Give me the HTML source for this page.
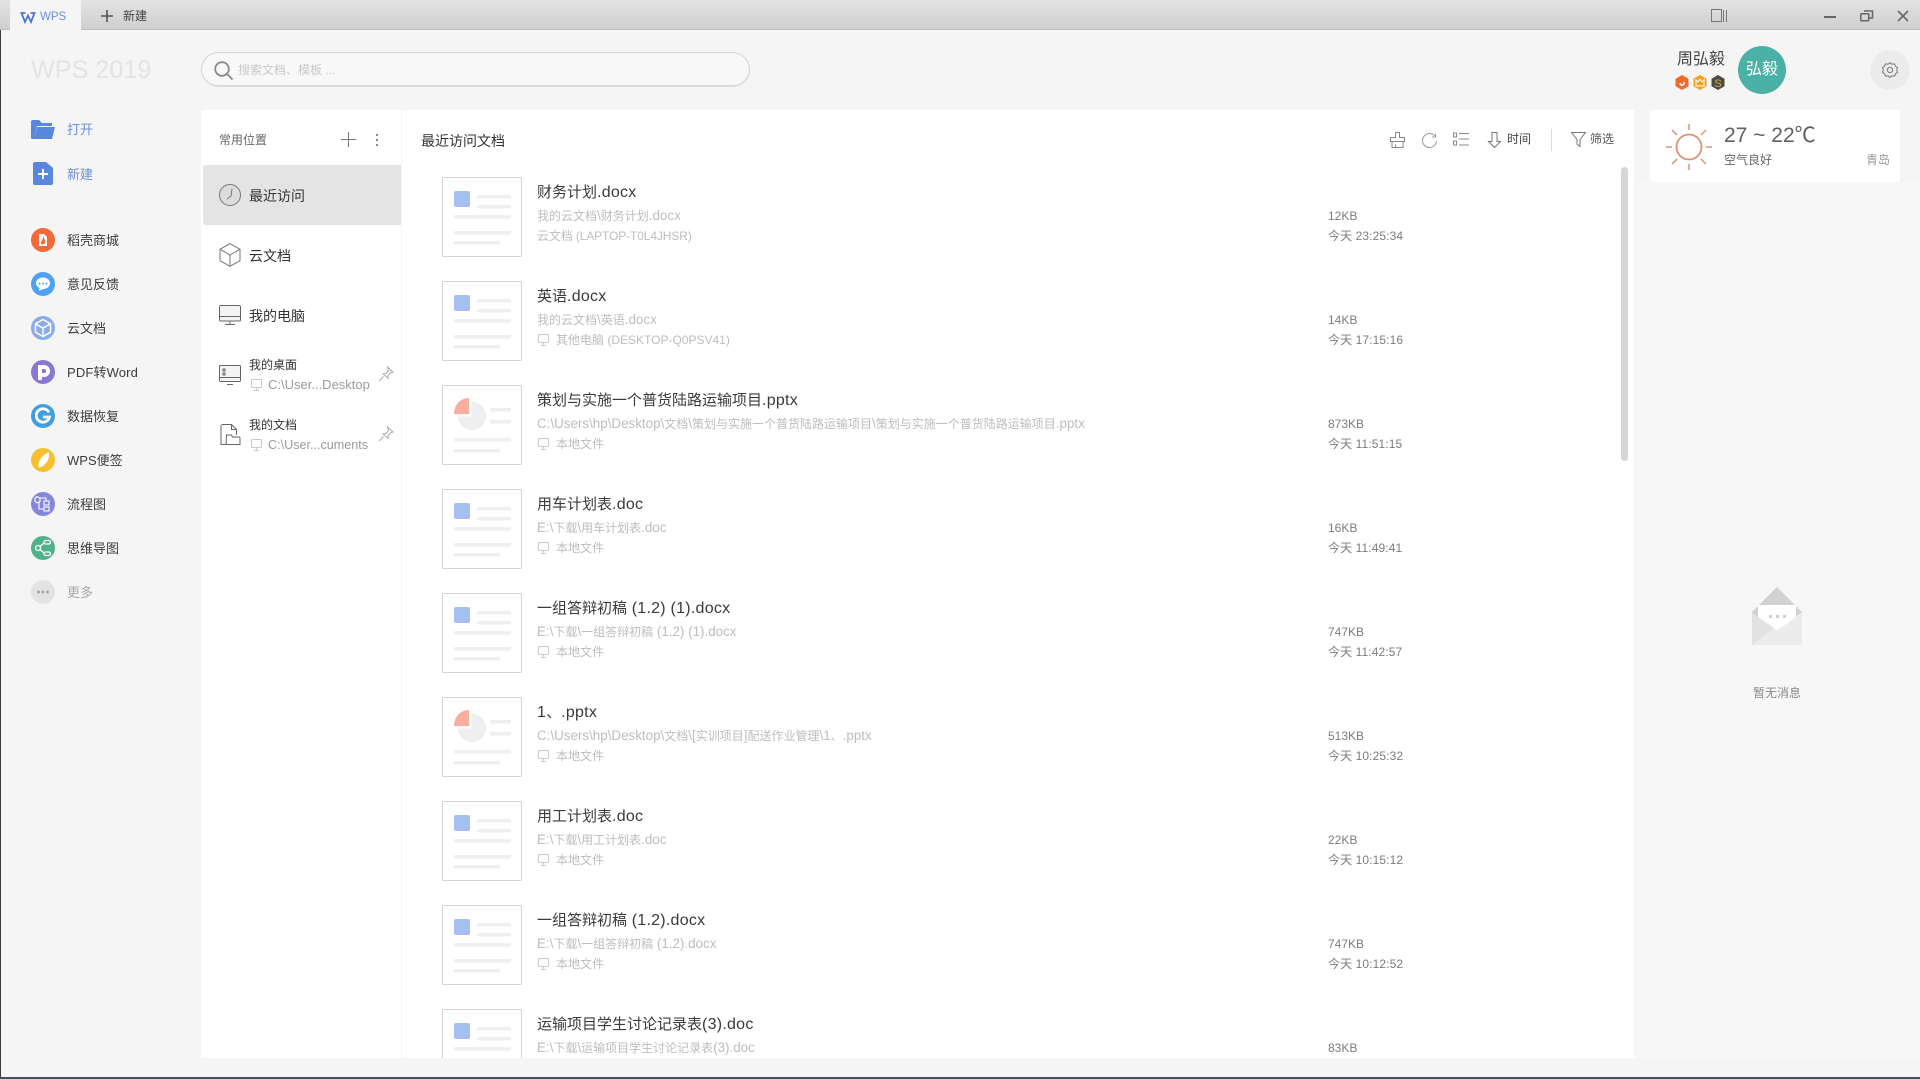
<!DOCTYPE html>
<html lang="zh"><head><meta charset="utf-8"><title>WPS 2019</title>
<style>
*{box-sizing:border-box}
html,body{margin:0;padding:0}
body{width:1920px;height:1079px;overflow:hidden;position:relative;background:#f5f5f5;font-family:"Liberation Sans","Noto Sans CJK SC",sans-serif;color:#333}
.a,.t{position:absolute}
.t{white-space:nowrap;line-height:20px}
svg{position:absolute;overflow:visible}
.side{font-size:13px;left:67px;color:#3c3c3c}
.row{position:absolute;left:0;width:1232px;height:104px}
.th{position:absolute;left:40px;top:0;width:80px;height:80px;background:#fff;border:1px solid #d2d2d2;border-radius:2px}
.n{position:absolute;left:135px;top:6px;font-size:15px;line-height:20px;color:#3a3a3a;white-space:nowrap}
.n b{font-weight:400;font-size:16px;letter-spacing:.25px}
.p{position:absolute;left:135px;top:30px;font-size:12px;line-height:18px;color:#bdbdbd;white-space:nowrap}
.p b{font-weight:400;font-size:13.4px}
.l{position:absolute;left:135px;top:50px;font-size:12px;line-height:18px;color:#bdbdbd;white-space:nowrap}
.s{position:absolute;left:926px;top:30px;font-size:12px;line-height:18px;color:#7c7c7c;white-space:nowrap}
.d{position:absolute;left:926px;top:50px;font-size:12px;line-height:18px;color:#7c7c7c;white-space:nowrap;letter-spacing:.1px}
.ic{left:136px;top:53px}
.li{padding-left:19px}
</style></head><body>
<svg width="0" height="0" style="position:absolute"><defs>
<g id="w"><rect x="11" y="13" width="16" height="16" rx="2" fill="#a6c0f2"/><rect x="34" y="17" width="34" height="3.5" fill="#efefef"/><rect x="34" y="27" width="34" height="3.5" fill="#efefef"/><rect x="11" y="37" width="57" height="3.5" fill="#efefef"/><rect x="11" y="53" width="57" height="3.5" fill="#efefef"/><rect x="11" y="63" width="46" height="3.5" fill="#efefef"/></g>
<g id="s"><circle cx="29" cy="30" r="14" fill="#efefef"/><path d="M26 12v16H11C11 19 17 12 26 12z" fill="#f9ad9c"/><path d="M27.500 11v18" stroke="#fff" stroke-width="2"/><path d="M10 29.500h18" stroke="#fff" stroke-width="2"/><rect x="47" y="22" width="21" height="3.500" fill="#efefef"/><rect x="47" y="34" width="21" height="3.500" fill="#efefef"/><rect x="11" y="52" width="57" height="3.500" fill="#efefef"/><rect x="11" y="63" width="46" height="3.500" fill="#efefef"/></g>
<g id="m" fill="none" stroke="#c8c8c8" stroke-width="1"><rect x=".5" y=".5" width="10" height="8" rx="1"/><path d="M5.500 8.500v2.500M3 11.500h5"/></g>
</defs></svg>

<!-- title bar -->
<div class="a" style="left:0;top:0;width:1920px;height:30px;background:linear-gradient(#e3e3e4,#cfcfd1);border-bottom:1px solid #bdbdbd"></div>
<div class="a" style="left:10px;top:0;width:71px;height:31px;background:#f5f5f5"></div>
<svg style="left:20px;top:12px" width="16" height="12" viewBox="0 0 16 12"><path d="M.5 1h5M10.500 1h5M1.500 1l3.500 9 3-6.500 3 6.500 3.500-9" fill="none" stroke="#4d78c9" stroke-width="1.800"/></svg>
<div class="t" style="left:40px;top:7px;font-size:11.500px;color:#6b8fd6">WPS</div>
<svg style="left:100px;top:9px" width="14" height="14"><path d="M7 1v12M1 7h12" stroke="#555" stroke-width="1.600"/></svg>
<div class="t" style="left:123px;top:6px;font-size:12px;color:#444">新建</div>
<svg style="left:1711px;top:9px" width="16" height="14" fill="none" stroke="#777"><rect x=".5" y=".5" width="10" height="12"/><path d="M12.500 1v12M15.500 1v12"/></svg>
<svg style="left:1824px;top:16px" width="12" height="3"><rect width="12" height="2" fill="#666"/></svg>
<svg style="left:1860px;top:10px" width="14" height="12" fill="none" stroke="#666" stroke-width="1.500"><rect x=".8" y="3.800" width="8" height="7" rx="1"/><path d="M4 1h8.500v7H9"/></svg>
<svg style="left:1897px;top:10px" width="12" height="12"><path d="M1 1l10 10M11 1L1 11" stroke="#666" stroke-width="1.600"/></svg>
<div class="a" style="left:0;top:30px;width:1px;height:1049px;background:#3a3a40"></div>
<div class="a" style="left:1634px;top:182px;width:286px;height:876px;background:#f7f7f7"></div>
<div class="a" style="left:0;top:1077px;width:1920px;height:2px;background:#48505a"></div>

<!-- header -->
<div class="t" style="left:31px;top:54px;font-size:25.200px;line-height:32px;color:#e3e3e3">WPS 2019</div>
<div class="a" style="left:201px;top:52px;width:549px;height:35px;border:1px solid #d4d4d4;border-bottom:2px solid #dcdcdc;border-radius:18px;background:#f8f8f8"></div>
<svg style="left:213px;top:60px" width="22" height="22" fill="none" stroke="#8a8a8a" stroke-width="1.800"><circle cx="9" cy="9" r="6.800"/><path d="M14 14l5.500 5.500"/></svg>
<div class="t" style="left:238px;top:60px;font-size:12px;color:#c8c8c8">搜索文档、模板 ...</div>
<div class="t" style="left:1677px;top:50px;font-size:16px;color:#444">周弘毅</div>
<svg style="left:1674px;top:74px" width="52" height="18">
<path d="M8 1l6.500 3.800v7.500L8 16l-6.500-3.700V4.800z" fill="#ee6b2f"/><path d="M6 9c0 3 5 3 4-1" stroke="#fff" stroke-width="1.500" fill="none"/>
<path d="M26 1l6.500 3.800v7.500L26 16l-6.500-3.700V4.800z" fill="#f4a11c"/><path d="M22 6l2 2 2-3 2 3 2-2v6h-8z" fill="none" stroke="#fff"/>
<path d="M44 1l6.500 3.800v7.500L44 16l-6.500-3.700V4.800z" fill="#4f4a44"/><text x="44" y="13" font-size="11" text-anchor="middle" fill="#d4a94a" font-family="Liberation Sans">S</text>
</svg>
<div class="a" style="left:1738px;top:46px;width:48px;height:48px;border-radius:50%;background:#4bb0a6;color:#fff;font-size:16px;line-height:48px;text-align:center">弘毅</div>
<div class="a" style="left:1870px;top:50px;width:40px;height:40px;border-radius:50%;background:#ebebeb"></div>
<svg style="left:1882px;top:62px" width="16" height="16" viewBox="0 0 16 16" fill="none" stroke="#777"><path d="M8 .7l2 1.500 2.500-.3 1 2.300 2 1.500-.8 2.300.8 2.300-2 1.500-1 2.300-2.500-.3-2 1.500-2-1.500-2.500.3-1-2.300-2-1.500.8-2.300-.8-2.300 2-1.500 1-2.300 2.500.3z"/><circle cx="8" cy="8" r="2.600"/></svg>

<!-- left sidebar -->
<svg style="left:31px;top:120px" width="24" height="20"><path d="M0 2a2 2 0 012-2h6l3 3h10v3H6L3 19H1a1 1 0 01-1-1z" fill="#5a87de"/><path d="M6 7h18l-3 12H3z" fill="#5a87de"/></svg>
<div class="t side" style="top:120px;color:#6d8fd4">打开</div>
<svg style="left:33px;top:162px" width="20" height="23"><path d="M2 0h11l7 6v15a2 2 0 01-2 2H2a2 2 0 01-2-2V2a2 2 0 012-2z" fill="#5a87de"/><path d="M10 7v10M5 12h10" stroke="#fff" stroke-width="2"/></svg>
<div class="t side" style="top:165px;color:#6d8fd4">新建</div>

<svg style="left:31px;top:228px" width="24" height="24"><circle cx="12" cy="12" r="12" fill="#f4693a"/><path d="M8 6h5l3 3v9H8z" fill="#fff"/><path d="M12 8c1 3 3 4 2 7-1 2-4 2-4 0 0-2 2-3 2-7z" fill="#f4693a"/></svg>
<div class="t side" style="top:231px">稻壳商城</div>
<svg style="left:31px;top:272px" width="24" height="24"><circle cx="12" cy="12" r="12" fill="#4ea2f1"/><path d="M12 5.500c4 0 7 2.500 7 5.800s-3 5.700-7 5.700l-4 2 .5-3c-2-1-3.500-2.800-3.500-4.700 0-3.300 3-5.800 7-5.800z" fill="#fff"/><circle cx="8.500" cy="11.500" r="1" fill="#4ea2f1"/><circle cx="12" cy="11.500" r="1" fill="#4ea2f1"/><circle cx="15.500" cy="11.500" r="1" fill="#4ea2f1"/></svg>
<div class="t side" style="top:275px">意见反馈</div>
<svg style="left:31px;top:316px" width="24" height="24"><circle cx="12" cy="12" r="12" fill="#8bace6"/><path d="M12 3.500l7.500 4.300v8.400L12 20.500l-7.500-4.300V7.800zM4.500 7.800L12 12l7.500-4.200M12 12v8.500" fill="none" stroke="#fff" stroke-width="1.500"/></svg>
<div class="t side" style="top:319px">云文档</div>
<svg style="left:31px;top:360px" width="24" height="24"><circle cx="12" cy="12" r="12" fill="#8a78d0"/><path d="M7 5h6a6 6 0 010 12h-2v3H7z" fill="#fff"/><path d="M11 9h2a2 2 0 010 4h-2z" fill="#8a78d0"/></svg>
<div class="t side" style="top:363px;letter-spacing:.15px">PDF转Word</div>
<svg style="left:31px;top:404px" width="24" height="24"><circle cx="12" cy="12" r="12" fill="#3f9fe0"/><path d="M18 8.500A6.700 6.700 0 1018.500 13H12" fill="none" stroke="#fff" stroke-width="2.800"/></svg>
<div class="t side" style="top:407px">数据恢复</div>
<svg style="left:31px;top:448px" width="24" height="24"><circle cx="12" cy="12" r="12" fill="#f6c02f"/><path d="M18 4c1 6-2 13-10 16-2-6 3-13 10-16z" fill="#fff"/></svg>
<div class="t side" style="top:451px">WPS便签</div>
<svg style="left:31px;top:492px" width="24" height="24"><circle cx="12" cy="12" r="12" fill="#8487dc"/><g fill="none" stroke="#fff" stroke-width="1.100"><path d="M6 4.500l3 1.800v3L6 11 4 9.300v-3z"/><rect x="13" y="9" width="5" height="4"/><rect x="13" y="15" width="5" height="4"/><path d="M8 10v7h5M9 6h6v3"/></g></svg>
<div class="t side" style="top:495px">流程图</div>
<svg style="left:31px;top:536px" width="24" height="24"><circle cx="12" cy="12" r="12" fill="#4fb28d"/><g fill="none" stroke="#fff" stroke-width="1.300"><circle cx="7" cy="12" r="2.500"/><rect x="13" y="4.500" width="6.500" height="3.500" rx="1.700"/><rect x="13" y="16" width="6.500" height="3.500" rx="1.700"/><path d="M9 10.500L13 7M9 13.500l4 3.500"/></g></svg>
<div class="t side" style="top:539px">思维导图</div>
<svg style="left:31px;top:580px" width="24" height="24"><circle cx="12" cy="12" r="12" fill="#e3e3e3"/><circle cx="7.500" cy="12" r="1.500" fill="#a5a5a5"/><circle cx="12" cy="12" r="1.500" fill="#a5a5a5"/><circle cx="16.500" cy="12" r="1.500" fill="#a5a5a5"/></svg>
<div class="t side" style="top:583px;color:#a8a8a8">更多</div>

<!-- places panel -->
<div class="a" style="left:201px;top:110px;width:200px;height:948px;background:#fff;border-radius:3px 0 0 0"></div>
<div class="t" style="left:219px;top:130px;font-size:12px;color:#666">常用位置</div>
<svg style="left:341px;top:132px" width="15" height="15"><path d="M7.500 0v15M0 7.500h15" stroke="#777"/></svg>
<svg style="left:375px;top:134px" width="4" height="14" fill="#888"><rect x="1" width="2" height="2"/><rect x="1" y="5" width="2" height="2"/><rect x="1" y="10" width="2" height="2"/></svg>
<div class="a" style="left:203px;top:165px;width:198px;height:60px;background:#e4e4e4;border-radius:3px 0 0 3px"></div>
<svg style="left:219px;top:184px" width="22" height="22" fill="#dcdcdc" stroke="#777"><circle cx="11" cy="11" r="10.500"/><path d="M13 5l-1 7-4 3" fill="none"/></svg>
<div class="t" style="left:249px;top:186px;font-size:14px;color:#333">最近访问</div>
<svg style="left:219px;top:243px" width="22" height="24" fill="none" stroke="#777"><path d="M11 .7l10 5.600v11.400L11 23.300 1 17.700V6.300zM1 6.300L11 12l10-5.700M11 12v11.300"/></svg>
<div class="t" style="left:249px;top:246px;font-size:14px;color:#333">云文档</div>
<svg style="left:219px;top:305px" width="22" height="20" fill="none" stroke="#666"><path d="M2 .5h18a1.500 1.500 0 011.500 1.500v13a1 1 0 01-1 1h-19a1 1 0 01-1-1V2A1.500 1.500 0 012 .5z" fill="#f3f3f3"/><path d="M1 11.500h20M11 16v3.500M6 19.500h10"/></svg>
<div class="t" style="left:249px;top:306px;font-size:14px;color:#333">我的电脑</div>
<svg style="left:219px;top:365px" width="22" height="20" fill="none" stroke="#666"><rect x=".5" y=".5" width="21" height="16" rx="1" fill="#f3f3f3"/><path d="M1 12.500h20M8 19.500h6"/><rect x="4" y="4" width="2" height="2"/><rect x="4" y="8" width="2" height="2"/></svg>
<div class="t" style="left:249px;top:355px;font-size:12px;color:#333">我的桌面</div>
<svg style="left:251px;top:379px" width="12" height="13"><use href="#m"/></svg>
<div class="t" style="left:268px;top:375px;font-size:13px;color:#9a9a9a">C:\User...Desktop</div>
<svg style="left:378px;top:366px" width="16" height="16" fill="none" stroke="#aaa"><path d="M9.500 1l5.500 5-2 .5-3 3 .2 2.800L5 8l3-.5 2.500-3zM5.500 10.500L1 15"/></svg>
<svg style="left:220px;top:424px" width="21" height="22" fill="none" stroke="#666"><path d="M1.500.5h10l5 5V11M1 1v19.500h5"/><path d="M6.500 11h5l1 2h6.500a1 1 0 011 1v6.500h-14z" fill="#fff"/><path d="M11.500.5v5h5"/></svg>
<div class="t" style="left:249px;top:415px;font-size:12px;color:#333">我的文档</div>
<svg style="left:251px;top:439px" width="12" height="13"><use href="#m"/></svg>
<div class="t" style="left:268px;top:435px;font-size:12.600px;color:#9a9a9a">C:\User...cuments</div>
<svg style="left:378px;top:426px" width="16" height="16" fill="none" stroke="#aaa"><path d="M9.500 1l5.500 5-2 .5-3 3 .2 2.800L5 8l3-.5 2.500-3zM5.500 10.500L1 15"/></svg>

<!-- main -->
<div class="a" style="left:402px;top:110px;width:1232px;height:948px;background:#fff;overflow:hidden">
<div class="t" style="left:19px;top:21px;font-size:14px;color:#333">最近访问文档</div>
<div class="a" style="left:1219px;top:57px;width:7px;height:294px;background:#d6d6d6;border-radius:4px"></div>
<div class="t" style="left:1105px;top:19px;font-size:12px;color:#444">时间</div>
<div class="t" style="left:1188px;top:19px;font-size:12px;color:#555">筛选</div>

<div class="row" style="top:67px"><div class="th"><svg width="80" height="80"><use href="#w"/></svg></div><div class="n">财务计划<b>.docx</b></div><div class="p">我的云文档<b>\</b>财务计划<b>.docx</b></div><div class="l" style="letter-spacing:-.12px">云文档 (LAPTOP-T0L4JHSR)</div><div class="s">12KB</div><div class="d">今天 23:25:34</div></div>
<div class="row" style="top:171px"><div class="th"><svg width="80" height="80"><use href="#w"/></svg></div><div class="n">英语<b>.docx</b></div><div class="p">我的云文档<b>\</b>英语<b>.docx</b></div><svg class="ic" width="12" height="13"><use href="#m"/></svg><div class="l li">其他电脑 (DESKTOP-Q0PSV41)</div><div class="s">14KB</div><div class="d">今天 17:15:16</div></div>
<div class="row" style="top:275px"><div class="th"><svg width="80" height="80"><use href="#s"/></svg></div><div class="n">策划与实施一个普货陆路运输项目<b>.pptx</b></div><div class="p"><b>C:\Users\hp\Desktop\</b>文档<b>\</b>策划与实施一个普货陆路运输项目<b>\</b>策划与实施一个普货陆路运输项目<b>.pptx</b></div><svg class="ic" width="12" height="13"><use href="#m"/></svg><div class="l li">本地文件</div><div class="s">873KB</div><div class="d">今天 11:51:15</div></div>
<div class="row" style="top:379px"><div class="th"><svg width="80" height="80"><use href="#w"/></svg></div><div class="n">用车计划表<b>.doc</b></div><div class="p"><b>E:\</b>下载<b>\</b>用车计划表<b>.doc</b></div><svg class="ic" width="12" height="13"><use href="#m"/></svg><div class="l li">本地文件</div><div class="s">16KB</div><div class="d">今天 11:49:41</div></div>
<div class="row" style="top:483px"><div class="th"><svg width="80" height="80"><use href="#w"/></svg></div><div class="n">一组答辩初稿<b> (1.2) (1).docx</b></div><div class="p"><b>E:\</b>下载<b>\</b>一组答辩初稿<b> (1.2) (1).docx</b></div><svg class="ic" width="12" height="13"><use href="#m"/></svg><div class="l li">本地文件</div><div class="s">747KB</div><div class="d">今天 11:42:57</div></div>
<div class="row" style="top:587px"><div class="th"><svg width="80" height="80"><use href="#s"/></svg></div><div class="n"><b>1</b>、<b>.pptx</b></div><div class="p"><b>C:\Users\hp\Desktop\</b>文档<b>\[</b>实训项目<b>]</b>配送作业管理<b>\1</b>、<b>.pptx</b></div><svg class="ic" width="12" height="13"><use href="#m"/></svg><div class="l li">本地文件</div><div class="s">513KB</div><div class="d">今天 10:25:32</div></div>
<div class="row" style="top:691px"><div class="th"><svg width="80" height="80"><use href="#w"/></svg></div><div class="n">用工计划表<b>.doc</b></div><div class="p"><b>E:\</b>下载<b>\</b>用工计划表<b>.doc</b></div><svg class="ic" width="12" height="13"><use href="#m"/></svg><div class="l li">本地文件</div><div class="s">22KB</div><div class="d">今天 10:15:12</div></div>
<div class="row" style="top:795px"><div class="th"><svg width="80" height="80"><use href="#w"/></svg></div><div class="n">一组答辩初稿<b> (1.2).docx</b></div><div class="p"><b>E:\</b>下载<b>\</b>一组答辩初稿<b> (1.2).docx</b></div><svg class="ic" width="12" height="13"><use href="#m"/></svg><div class="l li">本地文件</div><div class="s">747KB</div><div class="d">今天 10:12:52</div></div>
<div class="row" style="top:899px"><div class="th"><svg width="80" height="80"><use href="#w"/></svg></div><div class="n">运输项目学生讨论记录表<b>(3).doc</b></div><div class="p"><b>E:\</b>下载<b>\</b>运输项目学生讨论记录表<b>(3).doc</b></div><div class="s">83KB</div></div>
</div>
<svg style="left:1390px;top:132px" width="15" height="16" fill="none" stroke="#888"><path d="M5.500.5h4v5h5v4H.5v-4h5zM2 9.500v6h11v-6M5.500 12.500v3"/></svg>
<svg style="left:1422px;top:133px" width="15" height="15" fill="none" stroke="#999"><path d="M12.800 3A7 7 0 1014.500 8"/><path d="M13.500.5v3.500H10"/></svg>
<svg style="left:1453px;top:132px" width="17" height="15" fill="none" stroke="#888"><rect x=".5" y="1" width="3" height="4"/><rect x=".5" y="9" width="3" height="4"/><path d="M6 1.500h10M6 7h10M6 13h10"/></svg>
<svg style="left:1488px;top:132px" width="13" height="16" fill="none" stroke="#777"><path d="M4 .5h5v9h3.500L6.500 15.500 .5 9.500H4z"/></svg>
<div class="a" style="left:1551px;top:129px;width:1px;height:22px;background:#dcdcdc"></div>
<svg style="left:1571px;top:132px" width="15" height="16" fill="none" stroke="#777"><path d="M.5.500h14L9 7.500v7l-3-2.500V7.500z"/></svg>

<!-- weather -->
<div class="a" style="left:1650px;top:110px;width:250px;height:72px;background:#fff;border-radius:3px"></div>
<svg style="left:1666px;top:124px" width="46" height="46" fill="none" stroke="#dd9273" stroke-width="1.500"><circle cx="23" cy="23" r="12.500" stroke-width="1.800"/><path d="M23 0v6M23 40v6M0 23h6M40 23h6M6 6l5 5M35 35l5 5M40 6l-5 5M11 35l-5 5"/></svg>
<div class="t" style="left:1724px;top:124px;font-size:21px;line-height:24px;color:#606060">27 ~ 22℃</div>
<div class="t" style="left:1724px;top:150px;font-size:12px;color:#666">空气良好</div>
<div class="t" style="left:1866px;top:150px;font-size:12px;color:#999">青岛</div>

<!-- empty messages -->
<svg style="left:1750px;top:586px" width="54" height="60"><path d="M27 1L52 26v10H2V26z" fill="#d2d2d2"/><path d="M2 27l25 18 25-19v33H2z" fill="#ececec"/><path d="M2 59V27l22 15z" fill="#e2e2e2"/><path d="M8 19h38v12L27 44 8 31z" fill="#fff"/><rect x="19" y="29" width="3" height="3" fill="#d0d0d0"/><rect x="26" y="29" width="3" height="3" fill="#d0d0d0"/><rect x="33" y="29" width="3" height="3" fill="#d0d0d0"/></svg>
<div class="t" style="left:1753px;top:683px;font-size:12px;color:#888">暂无消息</div>
</body></html>
